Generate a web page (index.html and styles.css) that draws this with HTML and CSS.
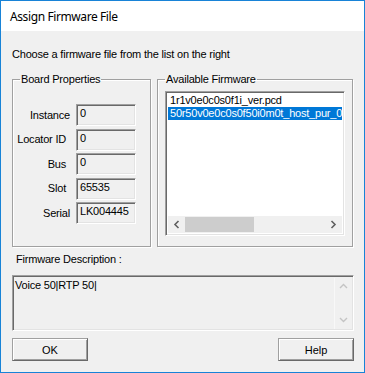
FILE: index.html
```html
<!DOCTYPE html>
<html lang="en">
<head>
    <meta charset="UTF-8">
    <title>Assign Firmware File</title>
    <link rel="stylesheet" href="styles.css">
</head>
<body>
    <div class="window">
        <div class="titlebar">Assign Firmware File</div>

        <div class="client">
            <p class="intro">Choose a firmware file from the list on the right</p>

            <div class="groups">
                <!-- board properties -->
                <fieldset class="group board">
                    <legend>Board Properties</legend>
                    <div class="props">
                        <label class="prop-label">Instance</label>
                        <div class="edit">0</div>
                        <label class="prop-label short">Locator ID</label>
                        <div class="edit">0</div>
                        <label class="prop-label short">Bus</label>
                        <div class="edit">0</div>
                        <label class="prop-label short">Slot</label>
                        <div class="edit">65535</div>
                        <label class="prop-label">Serial</label>
                        <div class="edit">LK004445</div>
                    </div>
                </fieldset>

                <!-- firmware list -->
                <fieldset class="group firmware">
                    <legend>Available Firmware</legend>
                    <div class="listbox">
                        <ul class="items">
                            <li>1r1v0e0c0s0f1i_ver.pcd</li>
                            <li class="selected">50r50v0e0c0s0f50i0m0t_host_pur_0</li>
                        </ul>
                        <div class="hscroll">
                            <span class="arrow">
                                <svg width="7" height="9" viewBox="0 0 7 9"><path d="M5.5 1 L2 4.5 L5.5 8" fill="none" stroke="#606060" stroke-width="1.6"/></svg>
                            </span>
                            <span class="track"><span class="thumb"></span></span>
                            <span class="arrow">
                                <svg width="7" height="9" viewBox="0 0 7 9"><path d="M1.5 1 L5 4.5 L1.5 8" fill="none" stroke="#606060" stroke-width="1.6"/></svg>
                            </span>
                        </div>
                    </div>
                </fieldset>
            </div>

            <div class="desc-label">Firmware Description :</div>
            <div class="desc">
                <div class="desc-text">Voice 50|RTP 50|</div>
                <div class="vscroll">
                    <svg width="9" height="7" viewBox="0 0 9 7"><path d="M1 5 L4.5 1.5 L8 5" fill="none" stroke="#c4c4c4" stroke-width="1.4"/></svg>
                    <svg width="9" height="7" viewBox="0 0 9 7"><path d="M1 2 L4.5 5.5 L8 2" fill="none" stroke="#c4c4c4" stroke-width="1.4"/></svg>
                </div>
            </div>

            <div class="buttons">
                <button class="btn">OK</button>
                <button class="btn">Help</button>
            </div>
        </div>
    </div>
</body>
</html>
```

FILE: styles.css
```css
body {
    margin: 0;
    font-family: "Liberation Sans", Arial, sans-serif;
    font-size: 11px;
    letter-spacing: -0.2px;
    color: #000;
}

.window {
    width: 365px;
    height: 373px;
    box-sizing: border-box;
    border: 1px solid #1883d7;
    background: #f0f0f0;
    display: flex;
    flex-direction: column;
}

.titlebar {
    height: 30px;
    flex: none;
    background: #fff;
    padding-left: 9px;
    display: flex;
    align-items: center;
    font-family: "Noto Sans", sans-serif;
    font-size: 12px;
    letter-spacing: -0.4px;
}

.client {
    padding: 17px 10px 0 11px;
    line-height: 13px;
}

.intro {
    margin: 0 0 12px 0;
}

.groups {
    display: flex;
    gap: 6px;
}

/* etched group boxes */
.group {
    margin: 0;
    padding: 0;
    height: 174px;
    box-sizing: border-box;
    border: 1px solid #a0a0a0;
    box-shadow: 1px 1px 0 #fff, inset 1px 1px 0 #fff;
    min-width: 0;
}
.group legend {
    padding: 0 1px;
    margin-left: 7px;
}
.board {
    width: 139px;
    flex: none;
}
.firmware {
    width: 196px;
    flex: none;
    padding: 5px 7px 0 7px;
}
.firmware legend {
    margin-left: 0;
}

.props {
    display: grid;
    grid-template-columns: 57px 60px;
    column-gap: 6px;
    row-gap: 2.5px;
    margin-top: 18px;
}
.prop-label {
    text-align: right;
    align-self: center;
}
.prop-label.short {
    padding-right: 4px;
}

/* sunken read-only edits */
.edit {
    height: 22px;
    box-sizing: border-box;
    border: 1px solid;
    border-color: #a0a0a0 #fff #fff #a0a0a0;
    box-shadow: inset 1px 1px 0 #696969, inset -1px -1px 0 #e3e3e3;
    padding: 2px 0 0 3px;
}

.listbox {
    height: 145px;
    box-sizing: border-box;
    border: 1px solid;
    border-color: #a0a0a0 #fff #fff #a0a0a0;
    box-shadow: inset 1px 1px 0 #696969, inset -1px -1px 0 #e3e3e3;
    background: #fff;
    padding: 2px;
    display: flex;
    flex-direction: column;
}
.items {
    list-style: none;
    margin: 0;
    padding: 0;
    flex: 1;
    overflow: hidden;
}
.items li {
    height: 13px;
    padding-left: 2px;
    white-space: nowrap;
    overflow: hidden;
}
.items li.selected {
    background: #0078d7;
    color: #fff;
}

.hscroll {
    height: 17px;
    background: #f0f0f0;
    display: flex;
}
.hscroll .arrow {
    width: 17px;
    display: flex;
    align-items: center;
    justify-content: center;
}
.hscroll .track {
    flex: 1;
    padding: 1px 0;
    display: flex;
}
.hscroll .thumb {
    width: 69px;
    background: #cdcdcd;
}

.desc-label {
    margin: 6px 0 9px 4px;
}

.desc {
    height: 56px;
    box-sizing: border-box;
    border: 1px solid;
    border-color: #a0a0a0 #fff #fff #a0a0a0;
    box-shadow: inset 1px 1px 0 #696969, inset -1px -1px 0 #e3e3e3;
    padding: 2px 1px 1px 2px;
    display: flex;
}
.desc-text {
    flex: 1;
    padding-top: 1px;
}
.vscroll {
    width: 17px;
    border-left: 1px solid #f8f8f8;
    display: flex;
    flex-direction: column;
    justify-content: space-between;
    align-items: center;
    padding: 5px 0 6px;
}

.buttons {
    display: flex;
    justify-content: space-between;
    margin-top: 7px;
}
.btn {
    width: 76px;
    height: 23px;
    font-family: "Liberation Sans", Arial, sans-serif;
    font-size: 11px;
    color: #000;
    background: #f0f0f0;
    border: 1px solid;
    border-color: #a0a0a0 #696969 #696969 #a0a0a0;
    box-shadow: inset 1px 1px 0 #fff, inset -1px -1px 0 #a0a0a0;
    padding: 0;
}
```
